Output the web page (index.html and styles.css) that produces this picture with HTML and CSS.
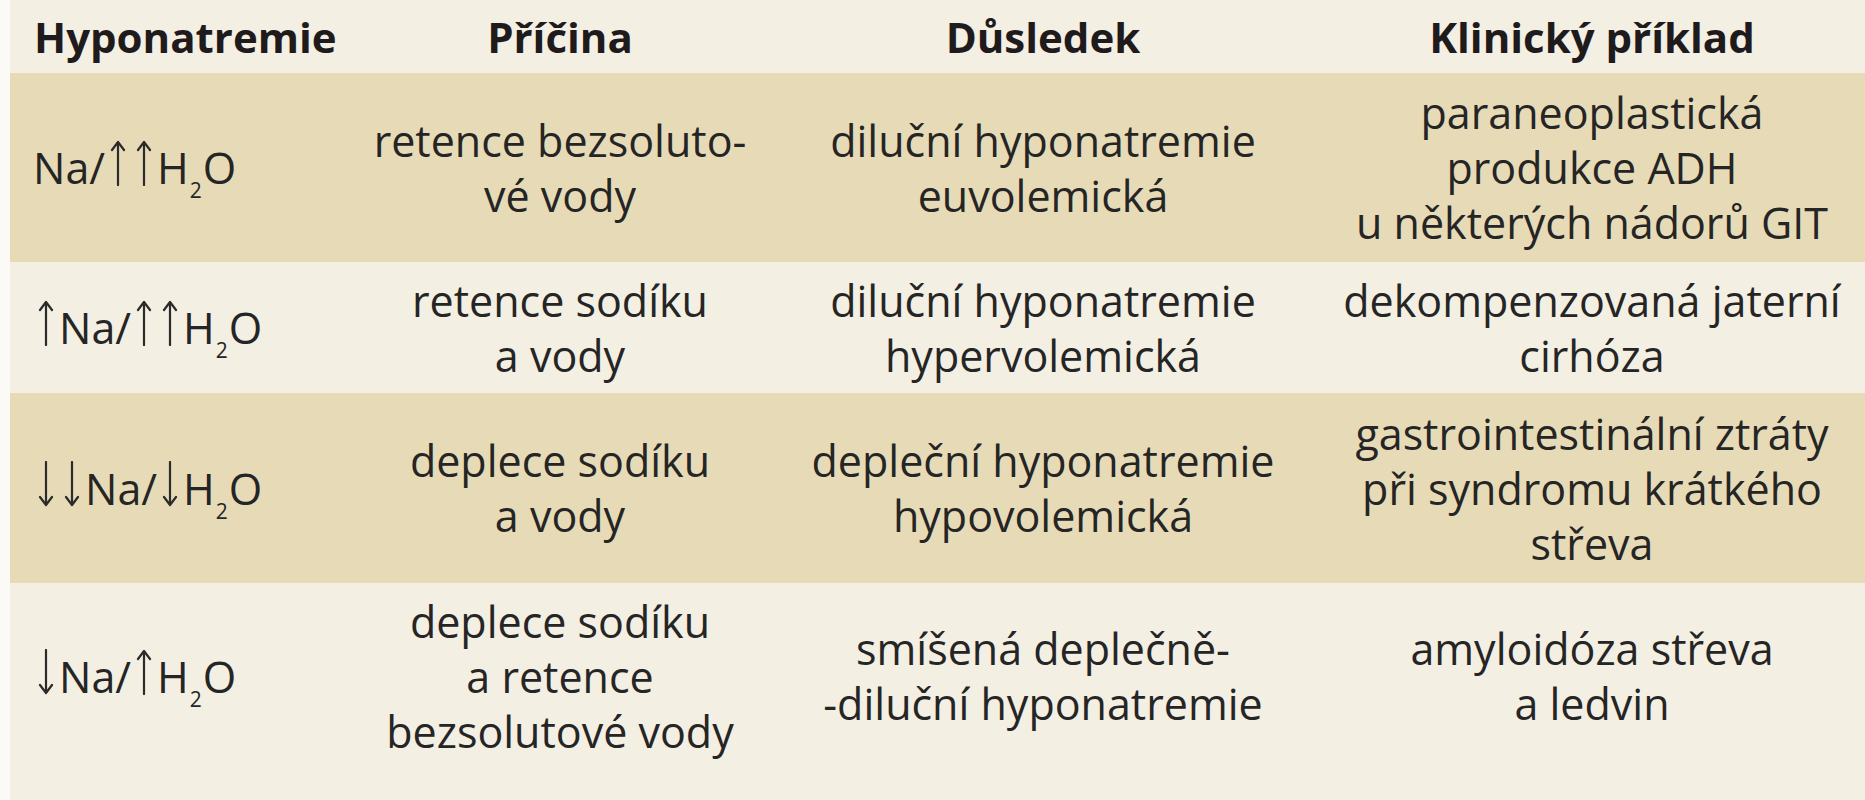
FILE: index.html
```html
<!DOCTYPE html>
<html lang="cs">
<head>
<meta charset="utf-8">
<title>Hyponatremie</title>
<link rel="stylesheet" href="styles.css">
</head>
<body>
<div class="page">
  <div class="table">
    <div class="row row-head">
      <div class="cell c1">Hyponatremie</div>
      <div class="cell c2">Příčina</div>
      <div class="cell c3">Důsledek</div>
      <div class="cell c4">Klinický příklad</div>
    </div>
    <div class="row row-1 tan">
      <div class="cell c1">Na/<svg class="ar" viewBox="0 0 26 46" role="img" aria-label="↑"><path d="M13 45V2M7 10L13 2L19 10"/></svg><svg class="ar" viewBox="0 0 26 46" role="img" aria-label="↑"><path d="M13 45V2M7 10L13 2L19 10"/></svg>H<sub>2</sub>O</div>
      <div class="cell c2">retence bezsoluto-<br>vé vody</div>
      <div class="cell c3">diluční hyponatremie<br>euvolemická</div>
      <div class="cell c4">paraneoplastická<br>produkce ADH<br>u některých nádorů GIT</div>
    </div>
    <div class="row row-2">
      <div class="cell c1"><svg class="ar" viewBox="0 0 26 46" role="img" aria-label="↑"><path d="M13 45V2M7 10L13 2L19 10"/></svg>Na/<svg class="ar" viewBox="0 0 26 46" role="img" aria-label="↑"><path d="M13 45V2M7 10L13 2L19 10"/></svg><svg class="ar" viewBox="0 0 26 46" role="img" aria-label="↑"><path d="M13 45V2M7 10L13 2L19 10"/></svg>H<sub>2</sub>O</div>
      <div class="cell c2">retence sodíku<br>a vody</div>
      <div class="cell c3">diluční hyponatremie<br>hypervolemická</div>
      <div class="cell c4">dekompenzovaná jaterní<br>cirhóza</div>
    </div>
    <div class="row row-3 tan">
      <div class="cell c1"><svg class="ar" viewBox="0 0 26 46" role="img" aria-label="↓"><path d="M13 1V44M7 36L13 44L19 36"/></svg><svg class="ar" viewBox="0 0 26 46" role="img" aria-label="↓"><path d="M13 1V44M7 36L13 44L19 36"/></svg>Na/<svg class="ar" viewBox="0 0 26 46" role="img" aria-label="↓"><path d="M13 1V44M7 36L13 44L19 36"/></svg>H<sub>2</sub>O</div>
      <div class="cell c2">deplece sodíku<br>a vody</div>
      <div class="cell c3">depleční hyponatremie<br>hypovolemická</div>
      <div class="cell c4">gastrointestinální ztráty<br>při syndromu krátkého<br>střeva</div>
    </div>
    <div class="row row-4">
      <div class="cell c1"><svg class="ar" viewBox="0 0 26 46" role="img" aria-label="↓"><path d="M13 1V44M7 36L13 44L19 36"/></svg>Na/<svg class="ar" viewBox="0 0 26 46" role="img" aria-label="↑"><path d="M13 45V2M7 10L13 2L19 10"/></svg>H<sub>2</sub>O</div>
      <div class="cell c2">deplece sodíku<br>a retence<br>bezsolutové vody</div>
      <div class="cell c3">smíšená deplečně-<br>-diluční hyponatremie</div>
      <div class="cell c4">amyloidóza střeva<br>a ledvin</div>
    </div>
  </div>
</div>
</body>
</html>
```

FILE: styles.css
```css
html, body {
  margin: 0;
  padding: 0;
  background: #f3efe3;
}
.page {
  width: 1865px;
  height: 800px;
  overflow: hidden;
  padding-left: 10px;
  box-sizing: border-box;
  background: #fbfaf6;
}
.table {
  background: #f3efe3;
  height: 800px;
  font-family: "Open Sans", Lato, sans-serif;
  font-size: 43px;
  line-height: 55px;
  color: #262525;
}
.row {
  display: grid;
  grid-template-columns: 320px 460px 506px 1fr;
  align-items: center;
}
.tan {
  background: #e7dbb7;
}
.row-head {
  height: 73px;
  font-weight: 700;
  font-size: 42px;
  color: #1f1b1c;
}
.row-1 { height: 189px; }
.row-2 { height: 131px; }
.row-3 { height: 190px; }
.row-4 { height: 186px; }
.cell {
  text-align: center;
  white-space: nowrap;
}
.c1 {
  text-align: left;
  padding-left: 23px;
}
.row-head .c1 {
  padding-left: 24px;
}
.c4 {
  padding-left: 23px;
}
.ar {
  width: 26px;
  height: 46px;
  vertical-align: -2px;
  fill: none;
  stroke: #2c2b2b;
  stroke-width: 2.2;
  stroke-linecap: round;
  stroke-linejoin: round;
}
sub {
  font-size: 21px;
  line-height: 0;
  vertical-align: -14px;
  margin: 0 1px;
}
```
